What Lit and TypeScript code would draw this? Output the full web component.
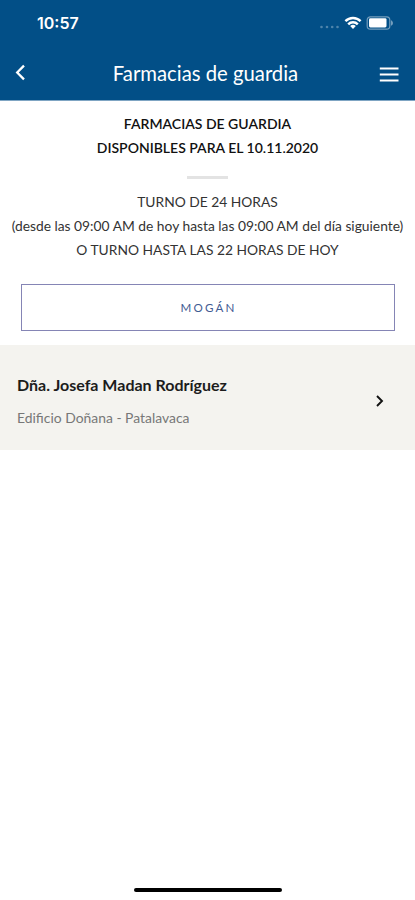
import { LitElement, html, css } from "lit";
import { customElement } from "lit/decorators.js";

@customElement("app-root")
class AppRoot extends LitElement {
  static styles = css`
    :host { display: flex; flex-direction: column; height: 900px; background: #fff; font-family: Lato, sans-serif; color: #333; white-space: nowrap; overflow: hidden; }
    * { box-sizing: border-box; }
    svg { flex: none; display: block; }
    header { background: #024f87; color: #fff; height: 101px; border-bottom: 1px solid #7fa5c3; flex: none; }
    .status { height: 46px; display: flex; align-items: center; justify-content: space-between; padding: 0 20px 0 37px; }
    .time { font: 600 16px/20px Inter, sans-serif; }
    .bar { height: 54px; display: flex; align-items: center; justify-content: space-between; padding: 0 16px 0 13px; }
    h1 { font-size: 20.3px; line-height: 28px; font-weight: 400; margin: 0; padding-left: 3px; }
    .intro { height: 183px; padding-top: 11px; display: flex; flex-direction: column; align-items: center; flex: none; }
    .intro p { margin: 0; font-size: 13.8px; line-height: 24px; }
    .intro .strong { font-size: 14px; font-weight: 600; color: #111; }
    .rule { width: 41px; height: 3px; background: #e3e3e3; margin: 16px 0 11px; flex: none; }
    .town { margin: 0 20px 0 21px; height: 47px; border: 1px solid #8585b5; display: flex; align-items: center; justify-content: center; color: #3f5b93; font-size: 11.6px; letter-spacing: 2.15px; padding: 0 0 1px 1px; flex: none; }
    .card { margin-top: 14px; height: 105px; background: #f4f3ef; padding: 7px 30px 0 17px; display: flex; align-items: center; justify-content: space-between; flex: none; }
    .name { font-size: 16px; line-height: 20px; font-weight: 700; color: #1c1c1c; }
    .place { font-size: 13.9px; line-height: 20px; color: #777; margin-top: 13px; }
    .home { width: 148px; height: 4px; border-radius: 2px; background: #000; margin: auto auto 8px; }
  `;
  render() {
    return html`
      <header>
        <div class="status">
          <span class="time">10:57</span>
          <svg width="76" height="20" viewBox="0 0 76 20" fill="none">
            <g fill="#fff" opacity=".3"><circle cx="2.5" cy="14" r="1.3"/><circle cx="8" cy="14" r="1.3"/><circle cx="13.2" cy="14" r="1.3"/><circle cx="18.5" cy="14" r="1.3"/></g>
            <g stroke="#fff" stroke-width="2.4"><path d="M26.4 8.2a10.7 10.7 0 0 1 15.2 0"/><path d="M29.2 11.3a6.7 6.7 0 0 1 9.6 0"/></g>
            <path d="M31.2 13.1a4 4 0 0 1 5.6 0L34 16.1z" fill="#fff"/>
            <rect x="48.2" y="3.8" width="22.6" height="12.4" rx="3.2" stroke="#fff" stroke-width="1.2" opacity=".45"/>
            <path d="M72 7.2c2.6 1 2.6 4.6 0 5.6z" fill="#fff" opacity=".45"/>
            <rect x="50" y="5.2" width="17.5" height="9.2" rx="1.4" fill="#fff"/>
          </svg>
        </div>
        <div class="bar">
          <svg width="16" height="20" viewBox="0 0 16 20" fill="none" stroke="#fff" stroke-width="2.3"><path d="M11 2.6L4.2 9.5l6.8 6.9"/></svg>
          <h1>Farmacias de guardia</h1>
          <svg width="20" height="20" viewBox="0 0 20 20" stroke="#fff" stroke-width="2"><path d="M.8 5.6h18.7M.8 11.6h18.7M.8 17.5h18.7"/></svg>
        </div>
      </header>
      <section class="intro">
        <p class="strong">FARMACIAS DE GUARDIA</p>
        <p class="strong">DISPONIBLES PARA EL 10.11.2020</p>
        <div class="rule"></div>
        <p>TURNO DE 24 HORAS</p>
        <p>(desde las 09:00 AM de hoy hasta las 09:00 AM del día siguiente)</p>
        <p>O TURNO HASTA LAS 22 HORAS DE HOY</p>
      </section>
      <div class="town">MOGÁN</div>
      <div class="card">
        <div><div class="name">Dña. Josefa Madan Rodríguez</div><div class="place">Edificio Doñana - Patalavaca</div></div>
        <svg width="10" height="14" viewBox="0 0 10 14" fill="none" stroke="#111" stroke-width="1.9"><path d="M2 2l5 5-5 5"/></svg>
      </div>
      <div class="home"></div>`;
  }
}
